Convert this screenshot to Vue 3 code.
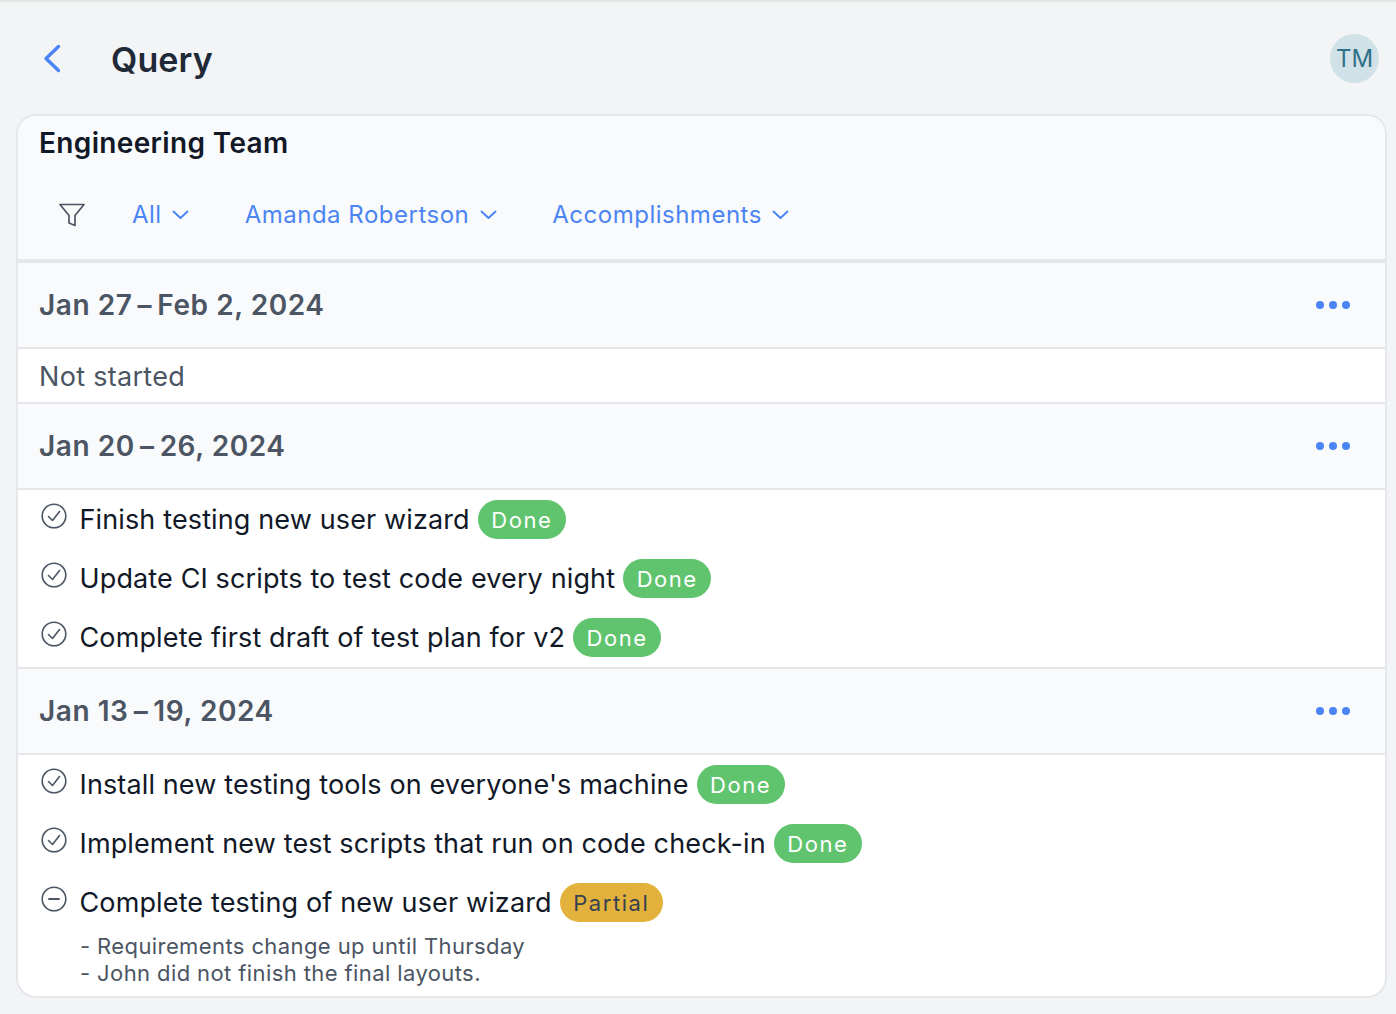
<template>
  <div class="page">
    <header class="topbar">
      <button class="back" aria-label="Back">
        <svg width="20" height="32" viewBox="0 0 20 32" fill="none">
          <path d="M16.5 3.5 L4 15.5 L16.5 27.5" stroke="#4b84f4" stroke-width="3.4" stroke-linecap="round" stroke-linejoin="round" />
        </svg>
      </button>
      <h1 class="title">Query</h1>
      <div class="avatar">TM</div>
    </header>

    <main class="card">
      <div class="card-head">
        <h2 class="team">Engineering Team</h2>
        <div class="filters">
          <svg class="funnel" width="28" height="26" viewBox="0 0 28 26" fill="none">
            <path d="M2 2.5 H26 L17 13.5 V23.5 L11 21 V13.5 Z" stroke="#4b5563" stroke-width="1.7" stroke-linejoin="round" />
          </svg>
          <button v-for="f in filters" :key="f" class="filter">
            <span>{{ f }}</span>
            <svg width="17" height="10" viewBox="0 0 17 10" fill="none">
              <path d="M1.5 1.5 L8.5 8 L15.5 1.5" stroke="#4b84f4" stroke-width="1.9" stroke-linecap="round" stroke-linejoin="round" />
            </svg>
          </button>
        </div>
      </div>

      <section v-for="week in weeks" :key="week.label" class="week">
        <div class="week-head">
          <h3 class="week-label">{{ week.label }}</h3>
          <div class="dots"><i></i><i></i><i></i></div>
        </div>
        <p v-if="!week.items.length" class="empty">Not started</p>
        <ul v-else class="items">
          <li v-for="item in week.items" :key="item.text" class="item">
            <div class="item-row">
              <svg class="status" width="26" height="26" viewBox="0 0 26 26" fill="none">
                <circle cx="13" cy="13" r="11.8" stroke="#4b5563" stroke-width="1.6" />
                <path v-if="item.status === 'Done'" d="M7.5 13.5 L11.5 17.5 L18.5 8.5" stroke="#4b5563" stroke-width="1.6" stroke-linecap="round" stroke-linejoin="round" />
                <path v-else d="M8 13 H18" stroke="#4b5563" stroke-width="1.8" stroke-linecap="round" />
              </svg>
              <span class="item-text">{{ item.text }}</span>
              <span class="badge" :class="item.status.toLowerCase()">{{ item.status }}</span>
            </div>
            <div v-if="item.notes" class="notes">
              <div v-for="n in item.notes" :key="n">{{ n }}</div>
            </div>
          </li>
        </ul>
      </section>
    </main>
  </div>
</template>

<script setup>
const filters = ['All', 'Amanda Robertson', 'Accomplishments']

const weeks = [
  { label: 'Jan 27\u2009–\u2009Feb 2, 2024', items: [] },
  {
    label: 'Jan 20\u2009–\u200926, 2024',
    items: [
      { text: 'Finish testing new user wizard', status: 'Done' },
      { text: 'Update CI scripts to test code every night', status: 'Done' },
      { text: 'Complete first draft of test plan for v2', status: 'Done' }
    ]
  },
  {
    label: 'Jan 13\u2009–\u200919, 2024',
    items: [
      { text: "Install new testing tools on everyone's machine", status: 'Done' },
      { text: 'Implement new test scripts that run on code check-in', status: 'Done' },
      {
        text: 'Complete testing of new user wizard',
        status: 'Partial',
        notes: ['- Requirements change up until Thursday', '- John did not finish the final layouts.']
      }
    ]
  }
]
</script>

<style>
html, body {
  margin: 0;
  background: #f3f4f6;
}
</style>

<style scoped>
.page {
  height: 1014px;
  box-sizing: border-box;
  overflow: hidden;
  border-top: 2px solid #e4e6e4;
  background: #f3f4f6;
  padding: 0 9px 0 16px;
  font-family: Inter, "Liberation Sans", sans-serif;
}

.topbar {
  display: flex;
  align-items: center;
  height: 112px;
  padding: 0 8px 0 26px;
}

.back {
  display: flex;
  width: 69px;
  padding: 0;
  margin-top: 2px;
  border: 0;
  background: none;
}

.title {
  margin: 2px 0 0;
  flex: 1;
  font-size: 34px;
  letter-spacing: 0.1px;
  font-weight: 600;
  color: #1f2937;
}

.avatar {
  width: 49px;
  height: 49px;
  border-radius: 50%;
  background: #d1e1e8;
  color: #2f7188;
  font-size: 24px;
  line-height: 49px;
  text-align: center;
  margin-top: 1px;
}

.card {
  width: 1371px;
  height: 884px;
  box-sizing: border-box;
  overflow: hidden;
  border: 2px solid #e5e7eb;
  border-radius: 20px;
  background: #fff;
}

.card-head {
  height: 147px;
  box-sizing: border-box;
  padding: 10px 20px 0;
  background: #f9fafb;
  border-bottom: 4px solid #e5e7eb;
}

.team {
  margin: 0 0 0 1px;
  font-size: 28px;
  line-height: 34px;
  letter-spacing: 0.35px;
  font-weight: 600;
  color: #111827;
}

.filters {
  display: flex;
  align-items: center;
  margin-top: 40px;
  padding-left: 20px;
}

.funnel {
  margin-right: 46px;
}

.filter {
  display: flex;
  align-items: center;
  gap: 10.5px;
  margin-right: 55.5px;
  padding: 0;
  border: 0;
  background: none;
  font: inherit;
  font-size: 24px;
  letter-spacing: 0.5px;
  color: #4b84f4;
}

.week-head {
  display: flex;
  align-items: center;
  justify-content: space-between;
  height: 86px;
  box-sizing: border-box;
  padding: 0 35px 0 21px;
  background: #f9fafb;
  border-bottom: 2px solid #e5e7eb;
}

.week-label {
  margin: 0;
  font-size: 28px;
  letter-spacing: 0.55px;
  font-weight: 600;
  color: #4b5563;
}

.dots {
  display: flex;
  gap: 5px;
}

.dots i {
  width: 8px;
  height: 8px;
  border-radius: 50%;
  background: #4b84f4;
}

.empty {
  height: 55px;
  box-sizing: border-box;
  margin: 0;
  padding: 11px 20px 0 21px;
  font-size: 27px;
  line-height: 34px;
  letter-spacing: 0.3px;
  color: #4b5563;
  border-bottom: 2px solid #e5e7eb;
}

.items {
  list-style: none;
  margin: 0;
  padding: 1px 20px 0;
}

.week:nth-of-type(2) .items {
  height: 179px;
  box-sizing: border-box;
  border-bottom: 2px solid #e5e7eb;
}

.item-row {
  display: flex;
  align-items: center;
  height: 59px;
}

.status {
  flex: none;
  margin: -10px 12.5px 0 3px;
}

.item-text {
  font-size: 27px;
  letter-spacing: 0.13px;
  color: #111827;
  margin-top: -2px;
}

.badge {
  margin: -2px 0 0 8px;
  height: 39px;
  box-sizing: border-box;
  padding: 0 13.5px;
  border-radius: 20px;
  font-size: 22px;
  line-height: 41px;
  letter-spacing: 1.55px;
}

.done {
  background: #60c46f;
  color: #fff;
}

.partial {
  background: #e3b23c;
  color: #374151;
}

.notes {
  padding-left: 42px;
  font-size: 22px;
  line-height: 27px;
  letter-spacing: 0.4px;
  color: #4b5563;
}
</style>
